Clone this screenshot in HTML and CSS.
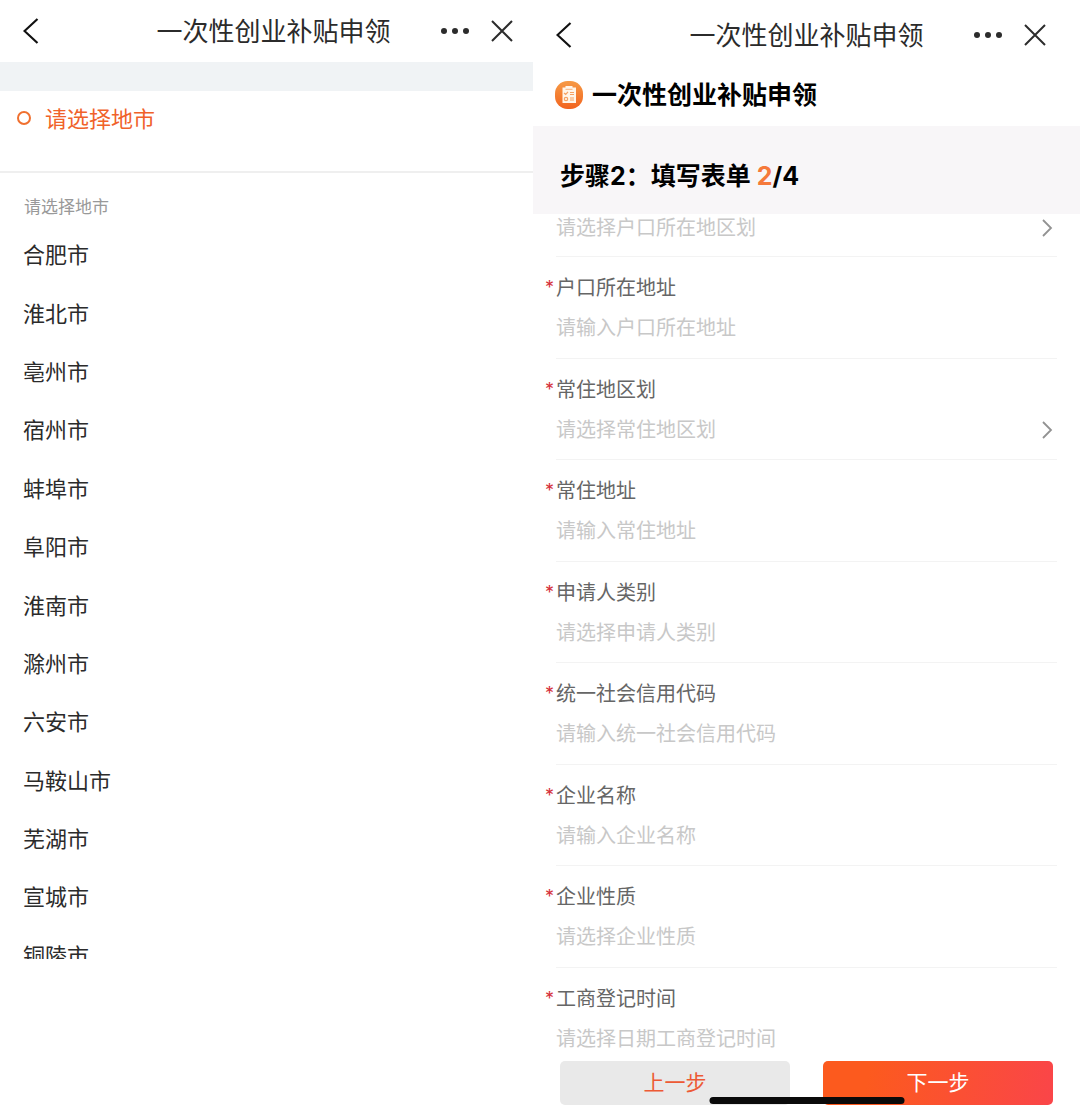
FILE: index.html
```html
<!DOCTYPE html>
<html lang="zh-CN">
<head>
<meta charset="utf-8">
<meta name="viewport" content="width=device-width, initial-scale=1">
<title>一次性创业补贴申领</title>
<link rel="stylesheet" href="styles.css">
</head>
<body>
<main class="screens">
  <section class="screen screen-city">
    <header class="nav nav-city">
      <button class="icon-button back" type="button" aria-label="返回"><svg width="16" height="28" viewBox="0 0 16 28"><path d="M14.500 2 1.500 14l13 12" fill="none" stroke="#111" stroke-width="2.200"/></svg></button>
      <h1 class="nav-title">一次性创业补贴申领</h1>
      <div class="nav-actions">
        <button class="icon-button" type="button" aria-label="更多"><svg width="30" height="22" viewBox="0 0 30 22" fill="#2c2c2c"><circle cx="4" cy="11" r="3"/><circle cx="15" cy="11" r="3"/><circle cx="26" cy="11" r="3"/></svg></button>
        <button class="icon-button" type="button" aria-label="关闭"><svg width="22" height="22" viewBox="0 0 22 22"><path d="m1 1 20 20M21 1 1 21" fill="none" stroke="#2c2c2c" stroke-width="2"/></svg></button>
      </div>
    </header>
    <div class="band"></div>
    <div class="current"><span class="ring"></span><span>请选择地市</span></div>
    <h2 class="hint">请选择地市</h2>
    <ul class="cities">
      <li class="city">合肥市</li>
      <li class="city">淮北市</li>
      <li class="city">亳州市</li>
      <li class="city">宿州市</li>
      <li class="city">蚌埠市</li>
      <li class="city">阜阳市</li>
      <li class="city">淮南市</li>
      <li class="city">滁州市</li>
      <li class="city">六安市</li>
      <li class="city">马鞍山市</li>
      <li class="city">芜湖市</li>
      <li class="city">宣城市</li>
      <li class="city">铜陵市</li>
    </ul>
  </section>

  <section class="screen screen-form">
    <header class="nav nav-form">
      <button class="icon-button back" type="button" aria-label="返回"><svg width="16" height="28" viewBox="0 0 16 28"><path d="M14.500 2 1.500 14l13 12" fill="none" stroke="#111" stroke-width="2.200"/></svg></button>
      <h1 class="nav-title">一次性创业补贴申领</h1>
      <div class="nav-actions">
        <button class="icon-button" type="button" aria-label="更多"><svg width="30" height="22" viewBox="0 0 30 22" fill="#2c2c2c"><circle cx="4" cy="11" r="3"/><circle cx="15" cy="11" r="3"/><circle cx="26" cy="11" r="3"/></svg></button>
        <button class="icon-button" type="button" aria-label="关闭"><svg width="22" height="22" viewBox="0 0 22 22"><path d="m1 1 20 20M21 1 1 21" fill="none" stroke="#2c2c2c" stroke-width="2"/></svg></button>
      </div>
    </header>
    <div class="service">
      <svg width="28" height="28" viewBox="0 0 28 28">
        <defs><linearGradient id="badge" x1="0" y1="0" x2="0" y2="1"><stop offset="0" stop-color="#f69a45"/><stop offset="1" stop-color="#f2641f"/></linearGradient></defs>
        <rect width="28" height="28" rx="12.500" fill="url(#badge)"/>
        <path d="M7.500 6.500h3V5h7v1.500h3.500V22H7.500z" fill="#fff6ea"/>
        <path d="M10.500 8.300h7" stroke="#f8b27c" stroke-width="1"/>
        <path d="m9 12 1.700 1.500 2.300-2.700M15 11.500h4M15 13.500h4M15 17h4M15 19h4" fill="none" stroke="#f6a263" stroke-width="1.200"/>
        <circle cx="11" cy="18" r="1.700" fill="none" stroke="#f6a263" stroke-width="1.200"/>
      </svg>
      <h2 class="service-name">一次性创业补贴申领</h2>
    </div>
    <div class="step">步骤2：填写表单 <span class="step-now">2</span>/4</div>
    <form class="fields" id="apply">
      <div class="field field-scrolled">
        <input class="value" type="text" readonly aria-label="户口所在地区划" placeholder="请选择户口所在地区划">
        <svg class="chevron" width="12" height="20" viewBox="0 0 12 20"><path d="m2 2 8 8-8 8" fill="none" stroke="#929292" stroke-width="1.800"/></svg>
      </div>
      <div class="field">
        <label class="label" for="addr">户口所在地址</label>
        <input class="value" id="addr" type="text" placeholder="请输入户口所在地址">
      </div>
      <div class="field">
        <label class="label" for="area">常住地区划</label>
        <input class="value" id="area" type="text" readonly placeholder="请选择常住地区划">
        <svg class="chevron" width="12" height="20" viewBox="0 0 12 20"><path d="m2 2 8 8-8 8" fill="none" stroke="#929292" stroke-width="1.800"/></svg>
      </div>
      <div class="field">
        <label class="label" for="home">常住地址</label>
        <input class="value" id="home" type="text" placeholder="请输入常住地址">
      </div>
      <div class="field">
        <label class="label" for="kind">申请人类别</label>
        <input class="value" id="kind" type="text" readonly placeholder="请选择申请人类别">
      </div>
      <div class="field">
        <label class="label" for="code">统一社会信用代码</label>
        <input class="value" id="code" type="text" placeholder="请输入统一社会信用代码">
      </div>
      <div class="field">
        <label class="label" for="company">企业名称</label>
        <input class="value" id="company" type="text" placeholder="请输入企业名称">
      </div>
      <div class="field">
        <label class="label" for="nature">企业性质</label>
        <input class="value" id="nature" type="text" readonly placeholder="请选择企业性质">
      </div>
      <div class="field">
        <label class="label" for="date">工商登记时间</label>
        <input class="value" id="date" type="text" readonly placeholder="请选择日期工商登记时间">
      </div>
    </form>
    <footer class="actions">
      <button class="action action-prev" type="button">上一步</button>
      <button class="action action-next" type="submit" form="apply">下一步</button>
      <span class="home-bar"></span>
    </footer>
  </section>
</main>
</body>
</html>
```
FILE: styles.css
```css
* {
  box-sizing: border-box;
}

body {
  margin: 0;
  background: #fff;
  color: #2b2b2b;
  font-family: Inter, "Noto Sans CJK SC", sans-serif;
}

h1,
h2,
ul {
  margin: 0;
  padding: 0;
  font-weight: 400;
}

button,
input {
  font: inherit;
}

svg {
  display: block;
}

.screens {
  display: grid;
  grid-template-columns: 533fr 547fr;
  height: 100vh;
}

.screen {
  display: flex;
  flex-direction: column;
  min-width: 0;
  min-height: 0;
}

.screen-city {
  padding-bottom: 152px;
}

/* Title bar */
.nav {
  display: grid;
  grid-template-columns: 1fr auto 1fr;
  align-items: center;
  flex: none;
}

.nav-city {
  height: 62px;
  padding-left: 14px;
}

.nav-form {
  height: 70px;
}

.icon-button {
  padding: 0;
  border: 0;
  background: none;
}

.back {
  justify-self: start;
  margin-left: 23px;
}

.nav-city .back {
  margin-left: 9px;
}

.nav-title {
  padding-top: 2px;
  font-size: 26px;
  line-height: 36px;
  white-space: nowrap;
}

.nav-actions {
  display: flex;
  justify-content: flex-end;
  gap: 21px;
  padding-right: 34px;
}

.nav-city .nav-actions {
  padding-right: 20px;
}

/* City picker */
.band {
  flex: none;
  height: 29px;
  background: #f0f3f5;
}

.current {
  display: flex;
  flex: none;
  gap: 14px;
  height: 82px;
  padding: 12px 17px;
  border-bottom: 2px solid #efefef;
  color: #f0622a;
  font-size: 22px;
  line-height: 32px;
}

.ring {
  width: 14px;
  height: 14px;
  margin-top: 8px;
  border: 2px solid #f0702f;
  border-radius: 50%;
}

.hint {
  flex: none;
  padding: 22px 24px 10px;
  color: #999;
  font-size: 17px;
  line-height: 24px;
}

.cities {
  display: flex;
  flex: 1;
  flex-direction: column;
  min-height: 0;
  overflow: hidden;
  list-style: none;
}

.city {
  display: flex;
  flex: 0 0 8%;
  align-items: center;
  padding: 0 23px 6px;
  font-size: 22px;
  line-height: 32px;
}

/* Application form */
.service {
  display: flex;
  flex: none;
  align-items: center;
  gap: 9px;
  height: 56px;
  padding: 0 22px 6px;
}

.service-name {
  color: #000;
  font-size: 25px;
  font-weight: 700;
  line-height: 36px;
}

.step {
  flex: none;
  padding: 32px 27px 20px;
  background: #f8f6f8;
  color: #000;
  font-size: 25px;
  font-weight: 700;
  line-height: 36px;
}

.step-now {
  color: #f5793b;
}

.fields {
  display: flex;
  flex: 1;
  flex-direction: column;
  min-height: 0;
  padding: 0 23px;
  overflow: hidden;
}

.field {
  display: grid;
  grid-template-columns: 1fr auto;
  flex: 0 0 12%;
  align-content: start;
  align-items: center;
  row-gap: 10px;
  padding-top: 16px;
  border-bottom: 1px solid #f3f3f3;
}

.field-scrolled {
  flex-basis: 43px;
  align-content: end;
  height: 43px;
  min-height: 0;
  padding: 0 0 15px;
}

.field-scrolled .value {
  height: 26px;
  line-height: 26px;
}

.label {
  grid-column: 1 / -1;
  position: relative;
  color: #666;
  font-size: 20px;
  line-height: 30px;
}

.label::before {
  content: "*";
  position: absolute;
  left: -11px;
  color: #d5303a;
  font-size: 18px;
}

.value {
  width: 100%;
  min-width: 0;
  height: 30px;
  padding: 0;
  border: 0;
  outline: 0;
  background: none;
  color: #333;
  font-size: 20px;
  line-height: 30px;
}

.value::placeholder {
  color: #c8c8c8;
  opacity: 1;
}

.chevron {
  margin-right: 4px;
}

.actions {
  position: relative;
  display: grid;
  grid-template-columns: 1fr 1fr;
  flex: none;
  gap: 33px;
  padding: 1px 27px 6px;
}

.action {
  height: 44px;
  padding: 0;
  border: 0;
  border-radius: 5px;
  font-size: 21px;
  line-height: 30px;
}

.action-prev {
  background: #e9e9e9;
  color: #ed5a35;
}

.action-next {
  background: linear-gradient(100deg, #fc5a1e 20%, #fa4549);
  color: #fff;
}

.home-bar {
  position: absolute;
  bottom: 7px;
  left: 50%;
  width: 195px;
  height: 7px;
  border-radius: 4px;
  background: #0a0a0a;
  transform: translateX(-50%);
}
```
